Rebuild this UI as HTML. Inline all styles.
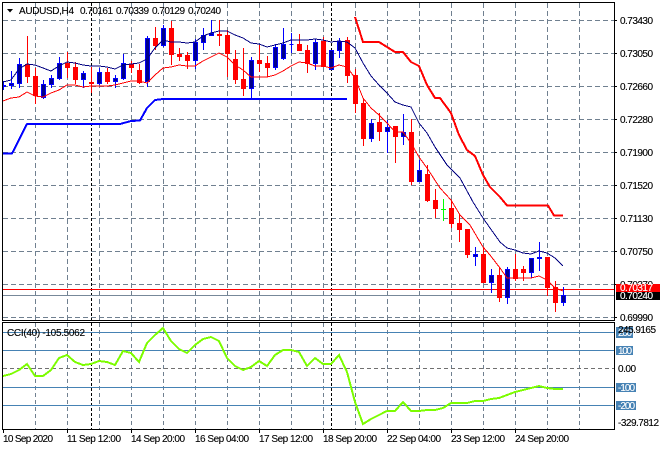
<!DOCTYPE html>
<html><head><meta charset="utf-8"><style>
html,body{margin:0;padding:0;background:#fff;width:660px;height:450px;overflow:hidden}
svg{display:block;position:absolute;left:0;top:0}
text{font-family:"Liberation Sans",sans-serif;font-size:10px;fill:#000;stroke:#000;stroke-width:.12}
text.w{fill:#fff;stroke:#fff}
.c{shape-rendering:crispEdges}
</style></head><body>
<svg width="660" height="450" viewBox="0 0 660 450" xmlns="http://www.w3.org/2000/svg">
<rect width="660" height="450" fill="#fff"/>
<g class="c" fill="none">
<path stroke="#708090" stroke-dasharray="5 3" d="M3 20.5H614M3 53.5H614M3 86.5H614M3 119.5H614M3 152.5H614M3 185.5H614M3 218.5H614M3 251.5H614M3 284.5H614M3 317.5H614"/>
<path stroke="#708090" stroke-dasharray="5 3" d="M35.5 3V320M67.5 3V320M99.5 3V320M131.5 3V320M163.5 3V320M195.5 3V320M227.5 3V320M259.5 3V320M291.5 3V320M323.5 3V320M355.5 3V320M387.5 3V320M419.5 3V320M451.5 3V320M483.5 3V320M515.5 3V320M547.5 3V320M579.5 3V320"/>
<path stroke="#000" stroke-dasharray="3 2" d="M91.5 3V320M331.5 3V320"/>
<path stroke="#708090" stroke-dasharray="4 3" d="M35.5 323V429M67.5 323V429M99.5 323V429M131.5 323V429M163.5 323V429M195.5 323V429M227.5 323V429M259.5 323V429M291.5 323V429M323.5 323V429M355.5 323V429M387.5 323V429M419.5 323V429M451.5 323V429M483.5 323V429M515.5 323V429M547.5 323V429M579.5 323V429"/>
<path stroke="#000" stroke-dasharray="3 2" d="M91.5 323V429M331.5 323V429"/>
<path stroke="#707070" stroke-dasharray="4 3" d="M3 368.5H614"/>
<path stroke="#4682b4" d="M3 332.5H614M3 350.5H614M3 387.5H614M3 405.5H614"/>
<path stroke="#f00" d="M3 289.5H614"/>
<path stroke="#778899" d="M3 295.5H614"/>
</g>
<g class="c">
<path fill="none" stroke="#f00" d="M27.5 36V83M35.5 68V104M67.5 52V78M75.5 62V84M91.5 67V93M107.5 68V84M131.5 61V73M139.5 64V84M155.5 27V50M171.5 21V65M179.5 48V61M187.5 52V69M219.5 20V46M227.5 30V77M235.5 50V84M243.5 48V96M259.5 45V72M267.5 56V77M299.5 34V51M307.5 45V73M323.5 37V67M347.5 37V83M355.5 69V113M363.5 98V146M379.5 113V141M395.5 126V163M411.5 119V185M427.5 165V202M435.5 189V218M451.5 200V228M459.5 214V242M467.5 229V258M483.5 247V283M499.5 267V302M515.5 254V281M523.5 266V281M547.5 257V296M555.5 281V312"/>
<path fill="#f00" d="M25 64h5v13h-5zM33 76h5v20h-5zM65 63h5v5h-5zM73 67h5v13h-5zM89 82h5v2h-5zM105 72h5v10h-5zM129 64h5v4h-5zM137 70h5v13h-5zM153 38h5v8h-5zM169 28h5v27h-5zM177 54h5v3h-5zM185 55h5v6h-5zM217 34h5v2h-5zM225 35h5v19h-5zM233 59h5v21h-5zM241 79h5v10h-5zM257 60h5v4h-5zM265 63h5v5h-5zM297 44h5v7h-5zM305 50h5v14h-5zM321 41h5v26h-5zM345 40h5v36h-5zM353 75h5v29h-5zM361 103h5v36h-5zM377 122h5v10h-5zM393 126h5v11h-5zM409 132h5v50h-5zM425 174h5v27h-5zM433 200h5v9h-5zM449 208h5v16h-5zM457 223h5v7h-5zM465 229h5v26h-5zM481 254h5v29h-5zM497 275h5v23h-5zM513 269h5v10h-5zM521 269h5v4h-5zM545 257h5v31h-5zM553 287h5v16h-5z"/>
<path fill="none" stroke="#00f" d="M3.5 81V90M11.5 71V89M19.5 58V88M43.5 80V99M51.5 75V88M59.5 57V80M83.5 71V88M99.5 68V85M115.5 75V88M123.5 54V80M147.5 36V87M163.5 25V47M195.5 39V69M203.5 28V50M211.5 20V36M251.5 57V99M275.5 44V70M283.5 28V60M291.5 33V53M315.5 39V70M339.5 38V58M371.5 119V142M387.5 120V153M403.5 114V145M419.5 160V182M475.5 247V266M491.5 269V293M507.5 267V304M531.5 258V278M539.5 242V271M563.5 287V306"/>
<path fill="#00008b" stroke="#00f" d="M3.5 85.5h2v1h-2zM9.5 83.5h4v2h-4zM17.5 64.5h4v19h-4zM41.5 84.5h4v13h-4zM49.5 78.5h4v6h-4zM57.5 63.5h4v15h-4zM81.5 73.5h4v6h-4zM97.5 72.5h4v11h-4zM113.5 78.5h4v3h-4zM121.5 63.5h4v15h-4zM145.5 38.5h4v43h-4zM161.5 28.5h4v17h-4zM193.5 42.5h4v18h-4zM201.5 35.5h4v7h-4zM209.5 33.5h4v2h-4zM249.5 60.5h4v28h-4zM273.5 47.5h4v20h-4zM281.5 44.5h4v14h-4zM289.5 44.5h4M313.5 42.5h4v21h-4zM329.5 50.5h4v19h-4zM337.5 41.5h4v9h-4zM369.5 123.5h4v15h-4zM385.5 127.5h4v4h-4zM401.5 132.5h4v4h-4zM417.5 170.5h4v11h-4zM473.5 254.5h4v2h-4zM489.5 275.5h4v7h-4zM505.5 269.5h4v28h-4zM529.5 258.5h4v14h-4zM537.5 257.5h4v1h-4zM561.5 295.5h4v7h-4z"/>
<path fill="none" stroke="#0f0" d="M443.5 199V221M441 209.5h5"/>
</g>
<g fill="none" class="c">
<polyline stroke="#000080" points="3,82 11,80 19,69 27,64 35,65 43,68 51,71 59,66 67,62 75,63 83,65 91,66 99,66 107,67 115,69 123,65 131,64 139,63 147,59 155,48 163,40 171,42 179,42 187,43 195,42 203,36 211,33 219,31 227,31 235,35 243,38 251,43 259,44 267,47 275,45 283,43 291,40 299,40 307,40 315,39 323,40 331,42 339,41 347,42 355,48 363,63 371,76 379,85 387,93 395,102 403,105 411,107 419,123 427,133 435,147 447,165 460,178 473,202 483,218 490,228 500,242 507,248 515,250 523,253 531,254 539,251 547,253 555,258 563,266"/>
<polyline stroke="#f00" points="3,101 11,98 19,97 27,92 35,96 43,97 51,93 59,90 67,85 75,85 83,87 91,86 99,86 107,86 115,85 123,83 131,81 139,81 147,83 155,75 163,68 171,67 179,65 187,66 195,66 203,61 211,57 219,53 227,57 235,65 243,70 251,77 259,77 267,77 275,75 283,71 291,66 299,62 307,63 315,66 323,66 331,68 339,65 347,67 355,78 363,98 371,108 379,115 387,123 395,132 403,132 411,143 419,157 427,168 440,188 451,200 460,215 470,225 483,247 490,255 500,268 507,278 523,278 531,278 539,276 547,280 555,288 563,291"/>
<polyline stroke="#f00" stroke-width="2" points="355,17 363,42 379,42 395,52 403,52 411,62 419,66 427,85 435,98 440,98 451,113 459,135 467,150 475,156 483,175 490,187 500,197 507,205.5 548,205.5 554,215.5 563,215.5"/>
<polyline stroke="#00f" stroke-width="2" points="3,153.5 12,153.5 27,124 120,124 131,121 140,120.5 147,108 155,100 163,99 347,99"/>
<polyline stroke="#7cfc00" stroke-width="2" points="3,376 11,374 19,370 27,364 35,376 43,376 51,370 59,358 67,355 75,362 83,365 91,364 99,361 107,362 115,365 123,351 131,353 139,362 147,343 155,335 163,328 171,341 179,349 187,353 195,345 203,339 211,337 219,341 227,358 235,366 243,370 251,367 259,361 267,366 275,355 283,350 291,350 299,352 307,366 315,358 323,364 331,364 339,355 347,372 355,402 363,424 371,419 379,415 387,411 395,411 403,402 411,411 419,411 427,410 435,410 443,408 451,403 459,403 467,403 475,401 483,401 491,399 499,398 507,395 515,392 523,390 531,388 539,386 547,388 555,389 563,389"/>
</g>
<g class="c" fill="none" stroke="#000">
<path d="M2.5 2.5H614.5V320.5H2.5Z"/>
<path d="M2.5 322.5H614.5V429.5H2.5Z"/>
<path d="M614 20.5h3M614 53.5h3M614 86.5h3M614 119.5h3M614 152.5h3M614 185.5h3M614 218.5h3M614 251.5h3M614 284.5h3M614 317.5h3"/>
<path d="M3.5 429v4M67.5 429v4M131.5 429v4M195.5 429v4M259.5 429v4M323.5 429v4M387.5 429v4M451.5 429v4M515.5 429v4"/>
</g>
<path d="M7 9h6l-3 3.5z" fill="#000"/>
<text x="19" y="14" textLength="55">AUDUSD,H4</text>
<text x="80" y="14" textLength="33">0.70161</text>
<text x="116" y="14" textLength="33">0.70339</text>
<text x="152" y="14" textLength="33">0.70129</text>
<text x="188" y="14" textLength="33">0.70240</text>
<g>
<text x="620" y="24" textLength="33">0.73430</text>
<text x="620" y="57" textLength="33">0.73050</text>
<text x="620" y="90" textLength="33">0.72660</text>
<text x="620" y="123" textLength="33">0.72280</text>
<text x="620" y="156" textLength="33">0.71900</text>
<text x="620" y="189" textLength="33">0.71520</text>
<text x="620" y="222" textLength="33">0.71130</text>
<text x="620" y="255" textLength="33">0.70750</text>
<text x="620" y="288" textLength="33">0.70370</text>
<text x="620" y="321" textLength="33">0.69990</text>
</g>
<rect class="c" x="616" y="284" width="44" height="8" fill="#f00"/>
<text class="w" x="620" y="291" textLength="33">0.70317</text>
<rect class="c" x="616" y="292" width="44" height="8" fill="#000"/>
<text class="w" x="620" y="299" textLength="33">0.70240</text>
<rect class="c" x="616" y="327" width="17" height="11" fill="#4682b4"/>
<rect class="c" x="616" y="346" width="17" height="9" fill="#4682b4"/>
<rect class="c" x="616" y="383" width="20" height="9" fill="#4682b4"/>
<rect class="c" x="616" y="401" width="20" height="9" fill="#4682b4"/>
<text class="w" x="618" y="336" textLength="14">200</text>
<text class="w" x="618" y="354" textLength="14">100</text>
<text class="w" x="618" y="391" textLength="17">-100</text>
<text class="w" x="618" y="409" textLength="17">-200</text>
<text x="618" y="333" textLength="38">245.9165</text>
<text x="618" y="372" textLength="18">0.00</text>
<text x="618" y="426" textLength="41">-329.7812</text>
<text x="7" y="336" textLength="78">CCI(40) -105.5062</text>
<g>
<text x="3" y="442" textLength="50">10 Sep 2020</text>
<text x="67" y="442" textLength="54">11 Sep 12:00</text>
<text x="131" y="442" textLength="54">14 Sep 20:00</text>
<text x="195" y="442" textLength="54">16 Sep 04:00</text>
<text x="259" y="442" textLength="54">17 Sep 12:00</text>
<text x="323" y="442" textLength="54">18 Sep 20:00</text>
<text x="387" y="442" textLength="54">22 Sep 04:00</text>
<text x="451" y="442" textLength="54">23 Sep 12:00</text>
<text x="515" y="442" textLength="54">24 Sep 20:00</text>
</g>
</svg>
</body></html>
